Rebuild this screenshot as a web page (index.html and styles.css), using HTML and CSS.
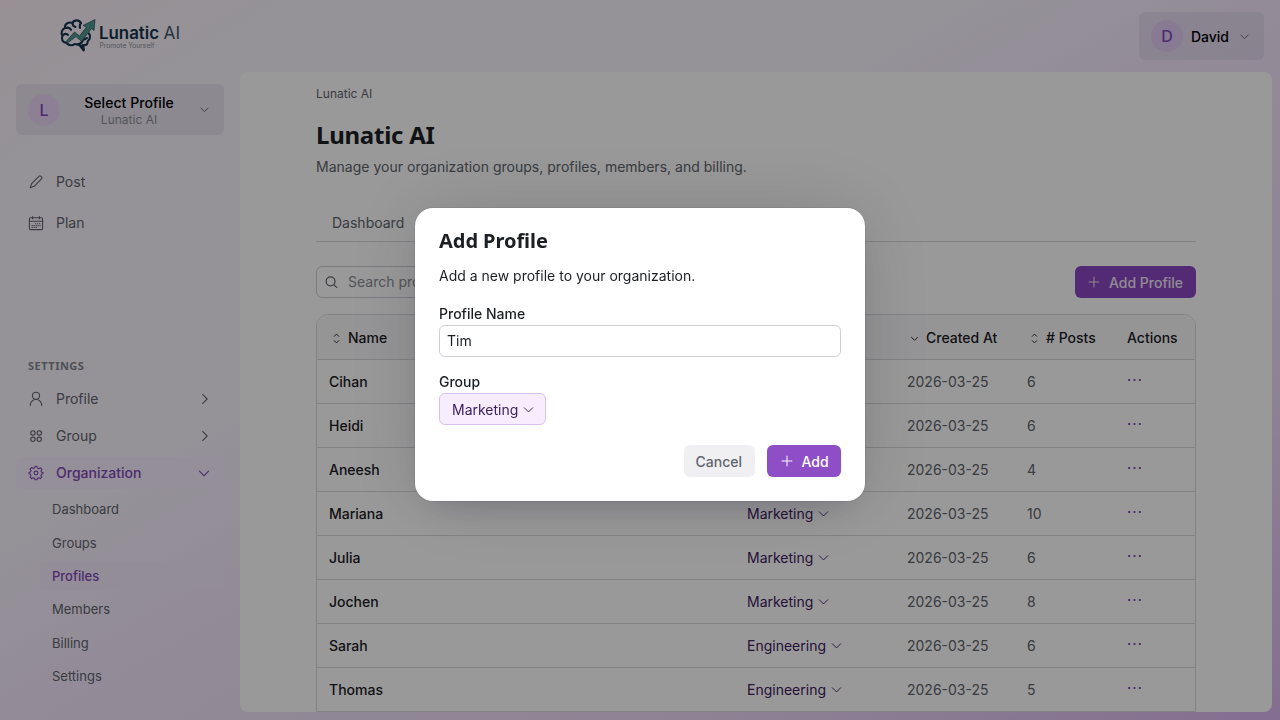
FILE: index.html
```html
<!DOCTYPE html>
<html lang="en">
<head>
<meta charset="UTF-8">
<meta name="viewport" content="width=device-width, initial-scale=1.0">
<title>Lunatic AI - Profiles</title>
<link rel="stylesheet" href="styles.css">
</head>
<body>

<!-- icons -->
<svg class="sprite" width="0" height="0">
  <symbol id="i-down" viewBox="0 0 16 16"><path d="M3.2 5.8 8 10.6l4.8-4.8"/></symbol>
  <symbol id="i-right" viewBox="0 0 16 16"><path d="m6.4 3.2 4.8 4.8-4.8 4.8"/></symbol>
  <symbol id="i-sort" viewBox="0 0 16 16"><path d="M5.3 6 8 3.3 10.7 6M5.300 10l2.700 2.700 2.700-2.700"/></symbol>
  <symbol id="i-plus" viewBox="0 0 16 16"><path d="M8 2.700v10.600M2.700 8h10.600"/></symbol>
  <symbol id="i-dots" viewBox="0 0 16 16"><path d="M1.300 8h2M7 8h2M12.700 8h2" stroke-width="2"/></symbol>
  <symbol id="i-search" viewBox="0 0 16 16"><circle cx="7" cy="6.8" r="4.7"/><path d="m10.4 10.2 3.6 3.6"/></symbol>
  <symbol id="i-pen" viewBox="0 0 16 16"><path d="m2.300 13.700 1.300-4L11.200 2.100c.4-.4 1-.4 1.400 0l1.100 1.100c.4.4.4 1 0 1.400L6.200 12.300l-3.900 1.400z" stroke-linejoin="round"/></symbol>
  <symbol id="i-plan" viewBox="0 0 16 16"><rect x="1.400" y="2.800" width="13.200" height="11.800" rx="1.200"/><path d="M1.400 6.300h13.200M4.600 1.200v3M11.400 1.200v3"/><path d="M7 8.700h5.600M3.600 10.600h9M3.600 12.500h6" stroke-dasharray="1.200 .8" stroke-width="1.100"/></symbol>
  <symbol id="i-user" viewBox="0 0 16 16"><circle cx="8" cy="4.800" r="3.600"/><path d="M2.200 15c0-3.500 2-5.600 4.200-6.500M13.800 15c0-3.500-2-5.600-4.200-6.500"/></symbol>
  <symbol id="i-group" viewBox="0 0 16 16"><circle cx="4.900" cy="4.900" r="2.200"/><circle cx="11.300" cy="4.900" r="2.200"/><circle cx="4.900" cy="11.300" r="2.200"/><circle cx="11.300" cy="11.300" r="2.200"/></symbol>
  <symbol id="i-gear" viewBox="0 0 16 16"><circle cx="8" cy="8" r="1.900"/><path d="M7 1.300h2l.5 1.800c.5.200.9.300 1.300.600l1.700-.9 1.400 1.400-.9 1.700c.2.400.4.800.6 1.300L15 7.500v1.300l-1.500.4c-.1.500-.3.900-.6 1.300l.9 1.700-1.400 1.400-1.700-.9c-.4.300-.8.400-1.300.6L9 14.800H7l-.5-1.500c-.5-.1-.9-.3-1.300-.6l-1.700.9-1.400-1.400.9-1.700c-.300-.4-.4-.8-.6-1.300L1 8.800V7.500l1.500-.5c.1-.5.3-.9.6-1.300l-.9-1.700 1.400-1.400 1.700.9c.4-.3.8-.4 1.300-.6z" stroke-linejoin="round"/></symbol>
</svg>

<div class="app">
  <header class="topbar">
    <svg class="logo" width="124" height="40" viewBox="0 0 124 40">
      <g fill="none" stroke="#15344f" stroke-width="2.100" stroke-linecap="round" stroke-linejoin="round">
        <path d="M23 7c-2-3.500-7-3.500-8.500 0-4-1.500-8 1-7.500 5-3 1-4.500 5-2.500 8-1.500 3 0 6.500 4 7 2 2.500 6 3 8 1l5 1 4 5.500-.5-5.500c4 .5 5-1.500 4.500-3.500 3-2 3-6 1.500-8"/>
        <path d="M8 12c2-.8 4 0 5 1.800M14.500 7c0 2 1 3.500 3 4M5 19c2-1.500 4-1.500 5 0M23 7c-1 1-1.500 3-1 5M20 28c2 0 4-1.500 5-4l4-2"/>
      </g>
      <path d="m19 28 7 1 1 6-6-5z" fill="#15344f"/>
      <path d="M8 25.500 16.500 16l5 4 7-9-3.500-1.500L37 3.500l-1 11-2.500-2-10 13-5.500-5L9.500 27z" fill="#4f978f" stroke="#234d5a" stroke-width=".7"/>
      <text class="logo-name" x="41" y="23" textLength="60" lengthAdjust="spacingAndGlyphs">Lunatic</text>
      <text class="logo-ai" x="105.500" y="23" textLength="16.500" lengthAdjust="spacingAndGlyphs">AI</text>
      <text class="logo-tag" x="41.500" y="32" textLength="55" lengthAdjust="spacingAndGlyphs">Promote Yourself</text>
    </svg>
    <div class="account">
      <span class="avatar">D</span>
      <span class="account-name">David</span>
      <svg class="icon s12"><use href="#i-down"/></svg>
    </div>
  </header>

  <div class="body">
    <nav class="sidebar">
      <div class="select-profile">
        <span class="avatar">L</span>
        <div class="select-text">
          <b>Select Profile</b>
          <small>Lunatic AI</small>
        </div>
        <svg class="icon s12"><use href="#i-down"/></svg>
      </div>

      <div class="nav-main">
        <a><svg class="icon"><use href="#i-pen"/></svg>Post</a>
        <a><svg class="icon"><use href="#i-plan"/></svg>Plan</a>
      </div>

      <div class="nav-title">SETTINGS</div>
      <div class="nav-settings">
        <a><svg class="icon"><use href="#i-user"/></svg>Profile<svg class="icon arrow"><use href="#i-right"/></svg></a>
        <a><svg class="icon"><use href="#i-group"/></svg>Group<svg class="icon arrow"><use href="#i-right"/></svg></a>
        <a class="active"><svg class="icon"><use href="#i-gear"/></svg>Organization<svg class="icon arrow"><use href="#i-down"/></svg></a>
      </div>
      <div class="nav-sub">
        <a>Dashboard</a>
        <a>Groups</a>
        <a class="active">Profiles</a>
        <a>Members</a>
        <a>Billing</a>
        <a>Settings</a>
      </div>
    </nav>

    <main class="panel">
      <div class="content">
        <div class="breadcrumb">Lunatic AI</div>
        <h1>Lunatic AI</h1>
        <p class="lead">Manage your organization groups, profiles, members, and billing.</p>
        <div class="tabs"><span class="tab">Dashboard</span></div>

        <div class="toolbar">
          <div class="search"><svg class="icon s14"><use href="#i-search"/></svg>Search profiles</div>
          <button class="btn primary"><svg class="icon"><use href="#i-plus"/></svg>Add Profile</button>
        </div>

        <div class="table">
          <div class="row head">
            <span><svg class="icon s15"><use href="#i-sort"/></svg>Name</span>
            <span></span>
            <span><svg class="icon s15 small"><use href="#i-down"/></svg>Created At</span>
            <span><svg class="icon s15"><use href="#i-sort"/></svg># Posts</span>
            <span>Actions</span>
          </div>
          <div class="row"><b>Cihan</b><span class="group"></span><span>2026-03-25</span><span>6</span><span class="more"><svg class="icon"><use href="#i-dots"/></svg></span></div>
          <div class="row"><b>Heidi</b><span class="group"></span><span>2026-03-25</span><span>6</span><span class="more"><svg class="icon"><use href="#i-dots"/></svg></span></div>
          <div class="row"><b>Aneesh</b><span class="group"></span><span>2026-03-25</span><span>4</span><span class="more"><svg class="icon"><use href="#i-dots"/></svg></span></div>
          <div class="row"><b>Mariana</b><span class="group">Marketing<svg class="icon s14"><use href="#i-down"/></svg></span><span>2026-03-25</span><span>10</span><span class="more"><svg class="icon"><use href="#i-dots"/></svg></span></div>
          <div class="row"><b>Julia</b><span class="group">Marketing<svg class="icon s14"><use href="#i-down"/></svg></span><span>2026-03-25</span><span>6</span><span class="more"><svg class="icon"><use href="#i-dots"/></svg></span></div>
          <div class="row"><b>Jochen</b><span class="group">Marketing<svg class="icon s14"><use href="#i-down"/></svg></span><span>2026-03-25</span><span>8</span><span class="more"><svg class="icon"><use href="#i-dots"/></svg></span></div>
          <div class="row"><b>Sarah</b><span class="group">Engineering<svg class="icon s14"><use href="#i-down"/></svg></span><span>2026-03-25</span><span>6</span><span class="more"><svg class="icon"><use href="#i-dots"/></svg></span></div>
          <div class="row"><b>Thomas</b><span class="group">Engineering<svg class="icon s14"><use href="#i-down"/></svg></span><span>2026-03-25</span><span>5</span><span class="more"><svg class="icon"><use href="#i-dots"/></svg></span></div>
        </div>
      </div>
    </main>
  </div>
</div>

<!-- add profile dialog -->
<div class="overlay">
  <div class="modal">
    <h2>Add Profile</h2>
    <p>Add a new profile to your organization.</p>
    <label for="name">Profile Name</label>
    <input type="text" id="name" value="Tim">
    <label>Group</label>
    <button class="btn select">Marketing<svg class="icon s14"><use href="#i-down"/></svg></button>
    <div class="modal-actions">
      <button class="btn plain">Cancel</button>
      <button class="btn primary"><svg class="icon"><use href="#i-plus"/></svg>Add</button>
    </div>
  </div>
</div>

</body>
</html>
```
FILE: styles.css
```css
* {
  box-sizing: border-box;
}

body {
  margin: 0;
  height: 720px;
  overflow: hidden;
  font-family: Inter, sans-serif;
  font-size: 14px;
  line-height: 20px;
  color: #60646c;
}

.sprite {
  position: absolute;
}

.icon {
  width: 16px;
  height: 16px;
  flex: none;
  fill: none;
  stroke: currentColor;
  stroke-width: 1.1;
}
.s12 { width: 13px; height: 13px; stroke-width: 1.1; }
.s14 { width: 15px; height: 15px; stroke-width: 1; }
.s15 { width: 15px; height: 15px; stroke-width: 1; }
.small { padding: 2px; stroke-width: 1.4; }

.app {
  height: 720px;
  display: flex;
  flex-direction: column;
  background: linear-gradient(to bottom right, #fdf1f9 0%, #f9f4fd 12%, #f9f5fe 36%, #f5e9fd 50%, #eedcf8 75%, #dcb8f0 100%);
}

.topbar {
  height: 72px;
  flex: none;
  display: flex;
  justify-content: space-between;
  align-items: center;
  padding: 0 16px 0 58px;
}
.logo-name { font: 600 17px Inter, sans-serif; fill: #15344f; }
.logo-ai { font: 17px Inter, sans-serif; fill: #3c5a70; }
.logo-tag { font: 7px Inter, sans-serif; fill: #8d8f9b; }

.avatar {
  width: 32px;
  height: 32px;
  flex: none;
  border-radius: 50%;
  background: #ebd6f9;
  color: #8347b9;
  font-size: 16px;
  font-weight: 500;
  line-height: 32px;
  text-align: center;
}

.account,
.select-profile {
  display: flex;
  align-items: center;
  border-radius: 6px;
  background: rgba(0, 0, 51, 0.06);
}
.account {
  height: 48px;
  padding: 0 13px 0 12px;
  gap: 8px;
}
.account .icon { margin-left: 1px; }
.account .avatar { background: #e3ccf3; }
.account-name {
  padding-top: 1px;
  color: #000;
  font-weight: 500;
}

.body {
  flex: 1;
  display: flex;
  padding: 0 8px 8px 0;
  min-height: 0;
}

/* sidebar */
.sidebar {
  width: 240px;
  flex: none;
  padding: 12px 16px 0;
}
.select-profile {
  height: 51px;
  padding: 0 13px 0 12px;
}
.select-text {
  flex: 1;
  padding-top: 2px;
  text-align: center;
  line-height: 17px;
}
.select-text b {
  display: block;
  color: #000;
  font-weight: 500;
  letter-spacing: 0.05px;
}
.select-text small {
  display: block;
  font-size: 12px;
  line-height: 17px;
  color: #8b8d98;
}

.nav-main a,
.nav-settings a {
  display: flex;
  align-items: center;
  gap: 12px;
  padding: 0 12px;
  height: 37px;
  border-radius: 6px;
}
.nav-main {
  padding-top: 26px;
}
.nav-main a { height: 41px; }
.nav-title {
  margin: 113px 12px 4px;
  font: bold 11px/20px "Noto Sans", sans-serif;
  letter-spacing: 0.5px;
  color: #83858f;
}
.arrow { margin-left: auto; }
.nav-settings .active {
  height: 32px;
  margin-top: 3px;
  background: #f7effe;
  color: #8347b9;
  font-weight: 500;
}
.nav-sub {
  display: flex;
  flex-direction: column;
  gap: 5.4px;
  padding: 6.3px 0 0 24px;
  font-size: 13px;
}
.nav-sub a {
  height: 28px;
  line-height: 28px;
  padding-left: 12px;
  border-radius: 4px;
}
.nav-sub .active {
  color: #8347b9;
  font-weight: 500;
  background: #f6ecfe;
}

/* main panel */
.panel {
  flex: 1;
  background: #fff;
  border-radius: 8px;
  overflow: hidden;
}
.content {
  width: 880px;
  margin: 0 auto;
}
.breadcrumb {
  padding-top: 12px;
  font-size: 12px;
}
h1 {
  margin: 16px 0 0;
  font: bold 24px/30px "Noto Sans", sans-serif;
  letter-spacing: -0.25px;
  color: #1c2024;
}
.lead {
  margin: 7px 0 0;
  letter-spacing: 0.015px;
}
.tabs {
  height: 37px;
  margin-top: 28px;
  padding: 8px 16px;
  border-bottom: 1px solid #d9d9e0;
}
.toolbar {
  display: flex;
  justify-content: space-between;
  margin: 24px 0 16px;
}
.search {
  width: 240px;
  height: 32px;
  display: flex;
  align-items: center;
  gap: 9px;
  padding: 0 7px;
  border: 1px solid #cdced6;
  border-radius: 6px;
  color: #8b8d98;
}
.search .icon {
  color: #60646c;
  stroke-width: 1.3;
}

.btn {
  height: 32px;
  display: inline-flex;
  align-items: center;
  border: 0;
  border-radius: 6px;
  padding: 0 12px;
  font: 500 14px Inter, sans-serif;
}
.primary {
  background: #8e4ec6;
  color: #fff;
  gap: 7px;
}
.primary .icon {
  stroke-width: 1;
}
.toolbar .primary {
  width: 121px;
  padding: 0 11px;
  background: #8a49c2;
  color: #f0e8f6;
}

.table {
  border: 1px solid #d9d9e0;
  border-radius: 12px 12px 0 0;
  overflow: hidden;
}
.row {
  display: grid;
  grid-template-columns: 418px 160px 120px 100px 80px;
  height: 44px;
  border-bottom: 1px solid #d9d9e0;
}
.row > * {
  display: flex;
  align-items: center;
  padding: 0 12px;
}
.row b {
  color: #1c2024;
  font-weight: 500;
}
.head {
  height: 45px;
  background: #f9f9fb;
  color: #1c2024;
  font-weight: 500;
}
.head span {
  gap: 4px;
  padding-top: 2px;
  white-space: nowrap;
}
.row .group {
  color: #402060;
  gap: 3px;
}
.row .more {
  color: #8347b9;
  padding-bottom: 4px;
}
.more .icon { width: 15px; }

/* dialog */
.overlay {
  position: fixed;
  inset: 0;
  display: flex;
  align-items: center;
  justify-content: center;
  padding-bottom: 11px;
  background: rgba(0, 0, 0, 0.4);
}
.modal {
  width: 450px;
  height: 293px;
  padding: 18px 24px;
  background: #fff;
  border-radius: 18px;
  color: #1c2024;
  box-shadow: 0 16px 36px -16px rgba(0, 9, 50, 0.2), 0 0 80px rgba(0, 9, 30, 0.14), 0 0 0 1px rgba(0, 0, 51, 0.06);
}
.modal h2 {
  margin: 0;
  font: bold 20px/30px "Noto Sans", sans-serif;
  letter-spacing: -0.05px;
}
.modal p {
  margin: 10px 0 18px;
}
.modal label {
  display: block;
  margin-bottom: 1px;
  font-weight: 500;
}
.modal input {
  display: block;
  width: 402px;
  height: 32px;
  margin-bottom: 15px;
  padding: 0 7px 2px;
  border: 1px solid #cdced6;
  border-radius: 6px;
  font: 14px Inter, sans-serif;
  color: #1c2024;
}
.select {
  width: 107px;
  background: #f7edfe;
  border: 1px solid #d9c0ee;
  color: #402060;
  font-weight: 400;
  gap: 3px;
}
.modal-actions {
  display: flex;
  justify-content: flex-end;
  gap: 12px;
  margin-top: 20px;
}
.plain {
  width: 71px;
  padding: 0 11.5px;
  background: #f0f0f3;
  color: #60646c;
}
.modal-actions .primary {
  width: 74px;
  padding: 0 11.5px;
}
```
